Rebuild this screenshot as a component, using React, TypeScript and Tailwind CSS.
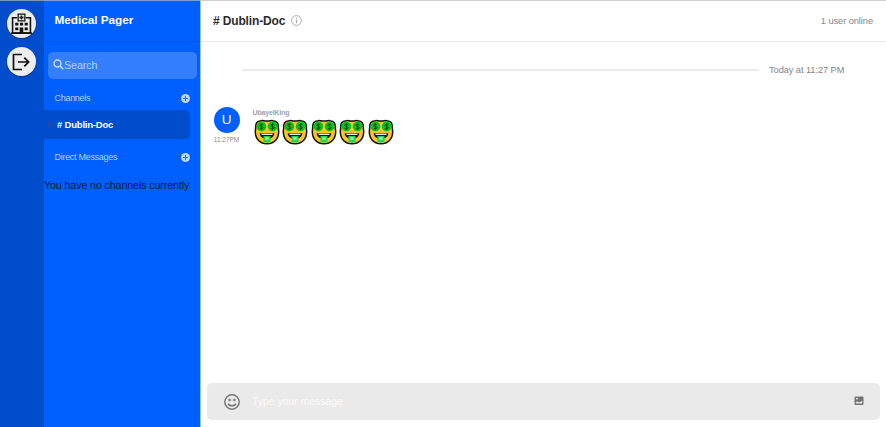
import React from "react";

function HospitalIcon() {
  return (
    <svg width="21" height="21" viewBox="0 0 20 20" fill="none" stroke="#111" strokeWidth="1.5">
      <path d="M6 4.500H1.500V19H18.500V4.500H14" />
      <path d="M0 19.200H20" />
      <path d="M6.800 1h6.400v6.500H6.800z" strokeWidth="1.200" />
      <path d="M10 2.300v4M8 4.300h4" strokeWidth="1.500" />
      <path d="M4 9.300h3v2.700H4zM8.500 9.300h3v2.700h-3zM13 9.300h3v2.700h-3zM4 13.800h3v2.700H4zM13 13.800h3v2.700h-3z" fill="#111" stroke="none" />
      <path d="M8.300 19V13.800h3.400V19z" fill="#111" stroke="none" />
    </svg>
  );
}

function LogoutIcon() {
  return (
    <svg width="18" height="18" viewBox="0 0 18 18" fill="none" stroke="#111" strokeWidth="1.700">
      <path d="M10 1.500H1.500V16.500H10" />
      <path d="M6 9H16.500M12.300 4.700L16.600 9L12.300 13.300" />
    </svg>
  );
}

function AddIcon() {
  return (
    <svg width="9" height="9" viewBox="0 0 9 9">
      <circle cx="4.500" cy="4.500" r="4.500" fill="#b8d3ff" />
      <path d="M4.500 2v5M2 4.500h5" stroke="#2472ff" strokeWidth="1" />
    </svg>
  );
}

function MoneyFace() {
  return (
    <svg width="26" height="26" viewBox="0 0 26 26">
      <path
        d="M7 1.700C9 1.400 10.500 1.800 11.500 2h3C15.500 1.800 17 1.400 19 1.700c3.600.3 5.500 3 5.300 6.300-.1 1.500.4 3 .4 4.800C24.700 20 20 24.800 13 24.800S1.300 20 1.300 12.800C1.300 11 1.800 9.500 1.700 8 1.500 4.700 3.400 2 7 1.700z"
        fill="#fdc12f"
        stroke="#10150c"
        strokeWidth="1.500"
      />
      <circle cx="7.400" cy="7.500" r="4.800" fill="#05c41d" />
      <circle cx="18.600" cy="7.500" r="4.800" fill="#05c41d" />
      <g fill="none" stroke="#07470d" strokeWidth="1">
        <path d="M9.200 5.800C8.500 5 5.700 4.900 5.700 6.300S9.100 7.400 9.100 8.800 6.200 10.100 5.500 9.300M7.400 4v7.200" />
        <path d="M20.400 5.800c-.7-.8-3.500-.9-3.500.5s3.400 1.100 3.400 2.500-2.900 1.300-3.600.5M18.600 4v7.200" />
      </g>
      <path d="M5.700 14.200h14.600c0 3.500-3.100 5.600-7.300 5.600s-7.300-2.100-7.300-5.600z" fill="#171b12" />
      <path d="M7.500 14.700h11v1.200h-11z" fill="#fff" />
      <path d="M9.500 17h7v5.500c0 .6-.5 1-1 1h-5c-.5 0-1-.4-1-1z" fill="#23d455" />
      <path d="M11.300 18.300h3.400v2.400h-3.400z" fill="#9af5b4" />
    </svg>
  );
}

function Section({ label }: { label: string }) {
  return (
    <div className="flex h-3 items-center justify-between pl-[10.500px] pr-[10.500px] text-[9px] tracking-[-0.290px] text-[#b4d0ff]">
      <span>{label}</span>
      <AddIcon />
    </div>
  );
}

export default function App() {
  return (
    <div className="flex h-[427px] w-[886px] overflow-hidden bg-white font-['Liberation_Sans',Arial,sans-serif] leading-none whitespace-nowrap">
      <aside className="flex w-[44px] shrink-0 flex-col items-center gap-[9px] border-t border-[#7795cb] bg-[#004dcc] pt-[8px] pr-[2px]">
        <div className="flex size-[29px] shrink-0 items-center justify-center rounded-full bg-[#ededed] shadow-[0_1px_2px_rgba(0,0,0,0.3)]">
          <HospitalIcon />
        </div>
        <div className="flex size-[29px] shrink-0 items-center justify-center rounded-full bg-[#ededed] shadow-[0_1px_2px_rgba(0,0,0,0.3)]">
          <LogoutIcon />
        </div>
      </aside>

      <nav className="flex w-[156px] shrink-0 flex-col border-t border-[#7f9fd8] bg-[#005fff]">
        <header className="flex h-[41px] shrink-0 items-center border-b border-[#0055e4] pl-[10.500px] text-[11.800px] font-bold tracking-[-0.050px] text-white">
          Medical Pager
        </header>
        <div className="mt-[10px] ml-[3.500px] flex h-[27px] w-[149.500px] shrink-0 items-center rounded-[5px] bg-[#337fff] pl-[5px] text-[10.800px] tracking-[-0.130px] text-[#b5d0ff]">
          <svg className="mb-[2px]" width="11" height="11" viewBox="0 0 11 11" fill="none" stroke="#c3d9ff" strokeWidth="1.500">
            <circle cx="4.500" cy="4.500" r="3.500" />
            <path d="M7 7l3.300 3.300" />
          </svg>
          <span className="ml-[0.500px]">Search</span>
        </div>
        <div className="mt-[13px]">
          <Section label="Channels" />
        </div>
        <div className="mt-[6px] flex h-[29px] w-[146px] items-center rounded-r-[5px] bg-[#004dcc] pt-px pl-[13px] text-[9.500px] font-bold tracking-[-0.200px] text-white">
          # Dublin-Doc
        </div>
        <div className="mt-[12px]">
          <Section label="Direct Messages" />
        </div>
        <p className="mt-[17px] text-[10.700px] tracking-[-0.120px] text-[#06193a]">You have no channels currently</p>
      </nav>

      <main className="flex min-w-0 flex-1 flex-col border-t border-l border-t-[#cfcfcf] border-l-[#9fc3ff]">
        <header className="flex h-[41px] shrink-0 items-center border-b border-[#e9e9e9] pr-[13px] pl-[12px]">
          <h1 className="text-[12px] font-bold tracking-[-0.150px] text-[#2c2c30]"># Dublin-Doc</h1>
          <svg className="mb-px ml-[6px]" width="11" height="11" viewBox="0 0 11 11" fill="none" stroke="#a3a3a3">
            <circle cx="5.500" cy="5.500" r="4.900" strokeWidth=".9" />
            <path d="M5.500 4.700v3.500M5.500 2.700v1" strokeWidth="1" />
          </svg>
          <span className="mt-px ml-auto text-[9.300px] tracking-[-0.080px] text-[#858585]">1 user online</span>
        </header>

        <div className="mt-[23px] flex h-[11px] shrink-0 items-center pl-[41px]">
          <div className="-mt-px h-[2px] w-[516.500px] bg-[#ebebeb]" />
          <span className="ml-[10.500px] text-[9.300px] tracking-[-0.090px] text-[#858585]">Today at 11:27 PM</span>
        </div>

        <section className="mt-[31px] flex pl-[12px]">
          <div className="flex w-[27px] flex-col items-center">
            <div className="flex size-[26px] shrink-0 items-center justify-center rounded-full bg-[#005fff] text-[13.500px] text-white">U</div>
            <span className="mt-[4px] text-[6.450px] text-[#8b8b8b]">11:27PM</span>
          </div>
          <div className="ml-[12.500px] pt-[2px]">
            <div className="text-[7px] font-bold tracking-[-0.160px] text-[#9ca3ab]">UbayelKing</div>
            <div className="mt-[3px] ml-px flex gap-[2.600px]">
              <MoneyFace />
              <MoneyFace />
              <MoneyFace />
              <MoneyFace />
              <MoneyFace />
            </div>
          </div>
        </section>

        <footer className="mt-auto mr-[6.500px] mb-[7px] ml-[6px] flex h-[37px] shrink-0 items-center rounded-[5px] bg-[#eaeaea] pr-[16px] pl-[17px]">
          <svg width="16" height="16" viewBox="0 0 16 16" fill="none" stroke="#777">
            <circle cx="8" cy="8" r="7.200" strokeWidth="1.500" />
            <path d="M4.200 9.600c1.300 3 6.300 3 7.600 0" strokeWidth="1.500" />
            <circle cx="5.600" cy="6" r="1.300" fill="#777" stroke="none" />
            <circle cx="10.400" cy="6" r="1.300" fill="#777" stroke="none" />
          </svg>
          <span className="ml-[12px] text-[10.600px] tracking-[-0.100px] text-[#f9f9f9]">Type your message</span>
          <svg className="mb-px ml-auto" width="10" height="10" viewBox="0 0 10 10">
            <rect x=".5" y=".5" width="9" height="8.500" rx="1" fill="#727272" />
            <path d="M1.800 7.500V6.400l1.500-1.100L5 6.500 8.200 4.800v2.700z" fill="#eaeaea" />
            <circle cx="3" cy="2.700" r=".9" fill="#eaeaea" />
          </svg>
        </footer>
      </main>
    </div>
  );
}
